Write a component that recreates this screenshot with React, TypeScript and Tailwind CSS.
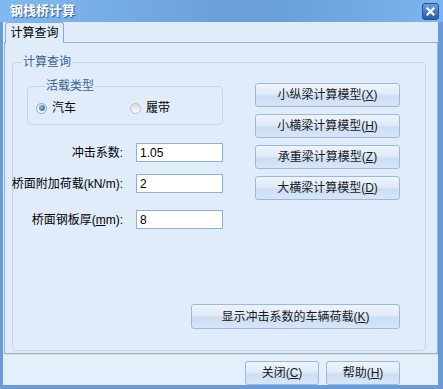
import type { ReactNode } from "react";

function Btn({ children, className = "" }: { children: ReactNode; className?: string }) {
  return (
    <button
      className={`h-[24px] whitespace-nowrap rounded-[3px] border border-[#9ab9e2] bg-[linear-gradient(to_bottom,#eef4fc_0%,#e0ebf9_45%,#cddef3_55%,#d7e5f6_100%)] text-[12px] leading-[22px] text-[#1a1a1a] ${className}`}
    >
      {children}
    </button>
  );
}

function Acc({ k }: { k: string }) {
  return (
    <>
      (<span className="underline">{k}</span>)
    </>
  );
}

function Radio({ checked, label, className = "" }: { checked?: boolean; label: string; className?: string }) {
  return (
    <label className={`flex items-center gap-[5px] ${className}`}>
      {checked ? (
        <span className="flex h-[11px] w-[11px] items-center justify-center rounded-full border border-[#8fa4be] bg-[linear-gradient(to_bottom,#dfe6ee,#ffffff)]">
          <span className="h-[6px] w-[6px] rounded-full bg-[radial-gradient(circle_at_35%_35%,#8fc0f0,#1f4f92)]" />
        </span>
      ) : (
        <span className="h-[11px] w-[11px] rounded-full border border-[#b7bec8] bg-[linear-gradient(to_bottom,#d9dde2,#fbfbfb)]" />
      )}
      <span className="text-[12px] leading-[16px] text-black">{label}</span>
    </label>
  );
}

function Field({ label, value, className = "" }: { label: ReactNode; value: string; className?: string }) {
  return (
    <div className={`flex items-center ${className}`}>
      <div className="flex w-[110px] shrink-0 justify-end">
        <span className="shrink-0 whitespace-nowrap text-[12px] leading-[16px] text-black">{label}</span>
      </div>
      <input
        defaultValue={value}
        className="ml-[13px] h-[19px] w-[87px] border border-[#8cb0e0] bg-white pl-[3px] text-[12px] text-black outline-none"
      />
    </div>
  );
}

export default function App() {
  return (
    <div className="flex h-[389px] w-[443px] flex-col bg-[#6a9ad8] font-['Liberation_Sans','Noto_Sans_CJK_SC',sans-serif]">
      {/* Title bar */}
      <div className="flex h-[24px] items-center bg-[linear-gradient(to_right,#80baf1,#6c9fd8_50%,#6aa1da_65%,#7ab6ef)] pl-[10px] pr-[4px]">
        <span className="text-[13px] font-bold text-white [text-shadow:1px_1px_1px_#2a5a9a]">钢栈桥计算</span>
        <div className="ml-auto flex h-[17px] w-[17px] items-center justify-center rounded-[3px] border border-[#24529a] bg-[linear-gradient(to_bottom,#6d9de0,#2a5aa8)]">
          <svg width="9" height="9" viewBox="0 0 9 9">
            <path d="M1.5 1.5 L7.5 7.5 M7.5 1.5 L1.5 7.5" stroke="white" strokeWidth="2.2" strokeLinecap="square" />
          </svg>
        </div>
      </div>

      {/* Client */}
      <div className="mb-[4px] ml-[3px] mr-[5px] flex flex-1 flex-col border-l border-[#e8f1fc] bg-[#e0ecfa]">
        {/* Tab strip */}
        <div className="flex h-[20px] items-end pl-[1px]">
          <div className="relative z-10 -mb-px flex h-[21px] w-[59px] items-center justify-center rounded-t-[3px] border border-b-0 border-[#84aee0] bg-[#e0ecfa] text-[12px] text-black">
            计算查询
          </div>
        </div>

        {/* Tab panel */}
        <div className="flex h-[312px] flex-col border border-[#8db2e3] pb-[2px] pl-[7px] pr-[11px] pt-[11px]">
          <fieldset className="flex-1 rounded-[4px] border border-[#c5d5ea]">
            <legend className="ml-[9px] px-[1px] text-[12px] leading-[16px] text-[#3c5f93]">计算查询</legend>
            <div className="flex pt-[8px]">
              {/* Left column */}
              <div className="flex w-[210px] flex-col">
                <fieldset className="ml-[14px] w-[196px] rounded-[4px] border border-[#c5d5ea] pb-[8px] pl-[8px] pt-[6px]">
                  <legend className="ml-[9px] px-[1px] text-[12px] leading-[16px] text-[#3c5f93]">活载类型</legend>
                  <div className="flex">
                    <Radio checked label="汽车" className="w-[94px]" />
                    <Radio label="履带" />
                  </div>
                </fieldset>
                <Field className="mt-[18px]" label="冲击系数:" value="1.05" />
                <Field className="mt-[12px]" label="桥面附加荷载(kN/m):" value="2" />
                <Field
                  className="mt-[17px]"
                  label={
                    <>
                      桥面钢板厚(<span className="underline">m</span>m):
                    </>
                  }
                  value="8"
                />
              </div>

              {/* Right column */}
              <div className="ml-[32px] mt-[5px] flex w-[145px] flex-col gap-[7px]">
                <Btn>小纵梁计算模型<Acc k="X" /></Btn>
                <Btn>小横梁计算模型<Acc k="H" /></Btn>
                <Btn>承重梁计算模型<Acc k="Z" /></Btn>
                <Btn>大横梁计算模型<Acc k="D" /></Btn>
              </div>
            </div>
            <div className="mt-[75px] flex justify-end pr-[25px]">
              <Btn className="h-[25px] w-[209px]">显示冲击系数的车辆荷载<Acc k="K" /></Btn>
            </div>
          </fieldset>
        </div>

        {/* Footer */}
        <div className="flex flex-1 justify-end gap-[7px] overflow-hidden border-t border-[#e4ddcc] bg-[#e3effc] pr-[38px] pt-[6px]">
          <Btn className="w-[74px] shrink-0">关闭<Acc k="C" /></Btn>
          <Btn className="w-[74px] shrink-0">帮助<Acc k="H" /></Btn>
        </div>
      </div>
    </div>
  );
}
